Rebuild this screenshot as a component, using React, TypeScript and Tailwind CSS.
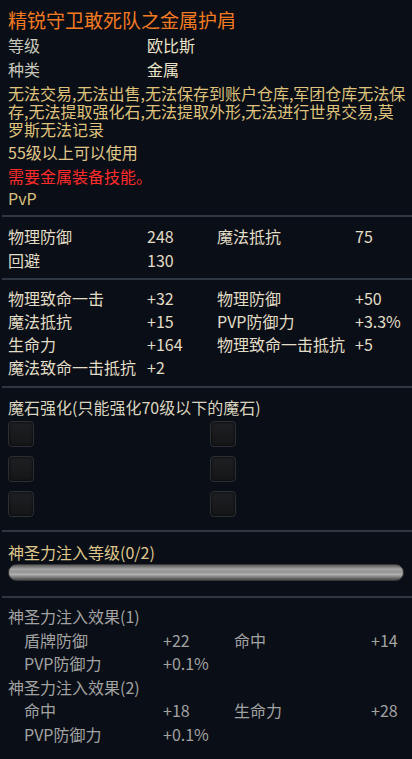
import React from "react";

const Divider = ({ className = "" }: { className?: string }) => (
  <div className={`ml-[2px] h-[2px] bg-[#2f3744] ${className}`} />
);

const Socket = () => (
  <div className="h-[26px] w-[26px] rounded-[4px] border border-[#2c2f33] bg-[linear-gradient(to_bottom,#1d1f22,#141618)] shadow-[inset_0_0_3px_rgba(0,0,0,0.9)]" />
);

const statRows1: [string, string, string, string][] = [
  ["物理防御", "248", "魔法抵抗", "75"],
  ["回避", "130", "", ""],
];

const statRows2: [string, string, string, string][] = [
  ["物理致命一击", "+32", "物理防御", "+50"],
  ["魔法抵抗", "+15", "PVP防御力", "+3.3%"],
  ["生命力", "+164", "物理致命一击抵抗", "+5"],
  ["魔法致命一击抵抗", "+2", "", ""],
];

export default function App() {
  return (
    <div
      className="min-h-[759px] w-[412px] bg-[#0a0e16] text-[16px] overflow-hidden"
      style={{ fontFamily: '"Noto Sans CJK SC", "Noto Sans", sans-serif' }}
    >
      {/* Title */}
      <div className="pl-[8px] pt-[7px] text-[19px] leading-[26px] text-[#f47a22]">
        精锐守卫敢死队之金属护肩
      </div>

      {/* Basic info */}
      <div className="grid grid-cols-[139px_1fr] pl-[8px] leading-[24px]">
        <div className="text-[#c8c8bc]">等级</div>
        <div className="text-[#ebe4cb]">欧比斯</div>
        <div className="text-[#c8c8bc]">种类</div>
        <div className="text-[#ebe4cb]">金属</div>
      </div>

      <div className="mt-[3px] pl-[8px] leading-[18px] text-[#dfc27c]">
        <div className="whitespace-nowrap">无法交易,无法出售,无法保存到账户仓库,军团仓库无法保</div>
        <div className="whitespace-nowrap">存,无法提取强化石,无法提取外形,无法进行世界交易,莫</div>
        <div className="whitespace-nowrap">罗斯无法记录</div>
      </div>

      <div className="mt-[2px] pl-[8px] leading-[24px] text-[#e0c88a]">55级以上可以使用</div>
      <div className="pl-[8px] leading-[25px] text-[#ff2b2b]">需要金属装备技能。</div>
      <div className="pl-[8px] leading-[18px] text-[#d8c07e]">PvP</div>

      <Divider className="mt-[8px]" />

      <div className="mt-[7px] grid grid-cols-[139px_70px_138px_1fr] pl-[8px] leading-[24px] text-[#e2ddc6]">
        {statRows1.map((r, i) => (
          <React.Fragment key={i}>
            <div>{r[0]}</div>
            <div>{r[1]}</div>
            <div>{r[2]}</div>
            <div>{r[3]}</div>
          </React.Fragment>
        ))}
      </div>

      <Divider className="mt-[6px]" />

      <div className="mt-[7px] grid grid-cols-[139px_70px_138px_1fr] pl-[8px] leading-[23px] text-[#e2ddc6]">
        {statRows2.map((r, i) => (
          <React.Fragment key={i}>
            <div className="whitespace-nowrap">{r[0]}</div>
            <div>{r[1]}</div>
            <div className="whitespace-nowrap">{r[2]}</div>
            <div>{r[3]}</div>
          </React.Fragment>
        ))}
      </div>

      <Divider className="mt-[7px]" />

      <div className="mt-[8px] pl-[8px] leading-[22px] text-[#d9d4bf]">
        魔石强化(只能强化70级以下的魔石)
      </div>
      <div className="mt-[3px] grid grid-cols-[202px_1fr] gap-y-[9px] pl-[8px]">
        <Socket />
        <Socket />
        <Socket />
        <Socket />
        <Socket />
        <Socket />
      </div>

      <Divider className="mt-[13px]" />

      <div className="mt-[8px] pl-[8px] leading-[24px] text-[#dfc78c]">神圣力注入等级(0/2)</div>
      <div className="ml-[8px] h-[17px] w-[396px] rounded-full border border-[#3a3a3a] bg-[linear-gradient(to_bottom,#5c5c5c_0%,#a6a6a6_28%,#929292_48%,#b4b4b4_62%,#7a7a7a_82%,#4a4a4a_100%)]" />

      <Divider className="mt-[15px]" />

      <div className="mt-[7px] leading-[23.6px] text-[#a2a2a2]">
        <div className="pl-[8px]">神圣力注入效果(1)</div>
        <div className="grid grid-cols-[139px_71px_137px_1fr] pl-[24px]">
          <div>盾牌防御</div>
          <div>+22</div>
          <div>命中</div>
          <div>+14</div>
          <div>PVP防御力</div>
          <div>+0.1%</div>
          <div />
          <div />
        </div>
        <div className="pl-[8px]">神圣力注入效果(2)</div>
        <div className="grid grid-cols-[139px_71px_137px_1fr] pl-[24px]">
          <div>命中</div>
          <div>+18</div>
          <div>生命力</div>
          <div>+28</div>
          <div>PVP防御力</div>
          <div>+0.1%</div>
          <div />
          <div />
        </div>
      </div>
    </div>
  );
}
